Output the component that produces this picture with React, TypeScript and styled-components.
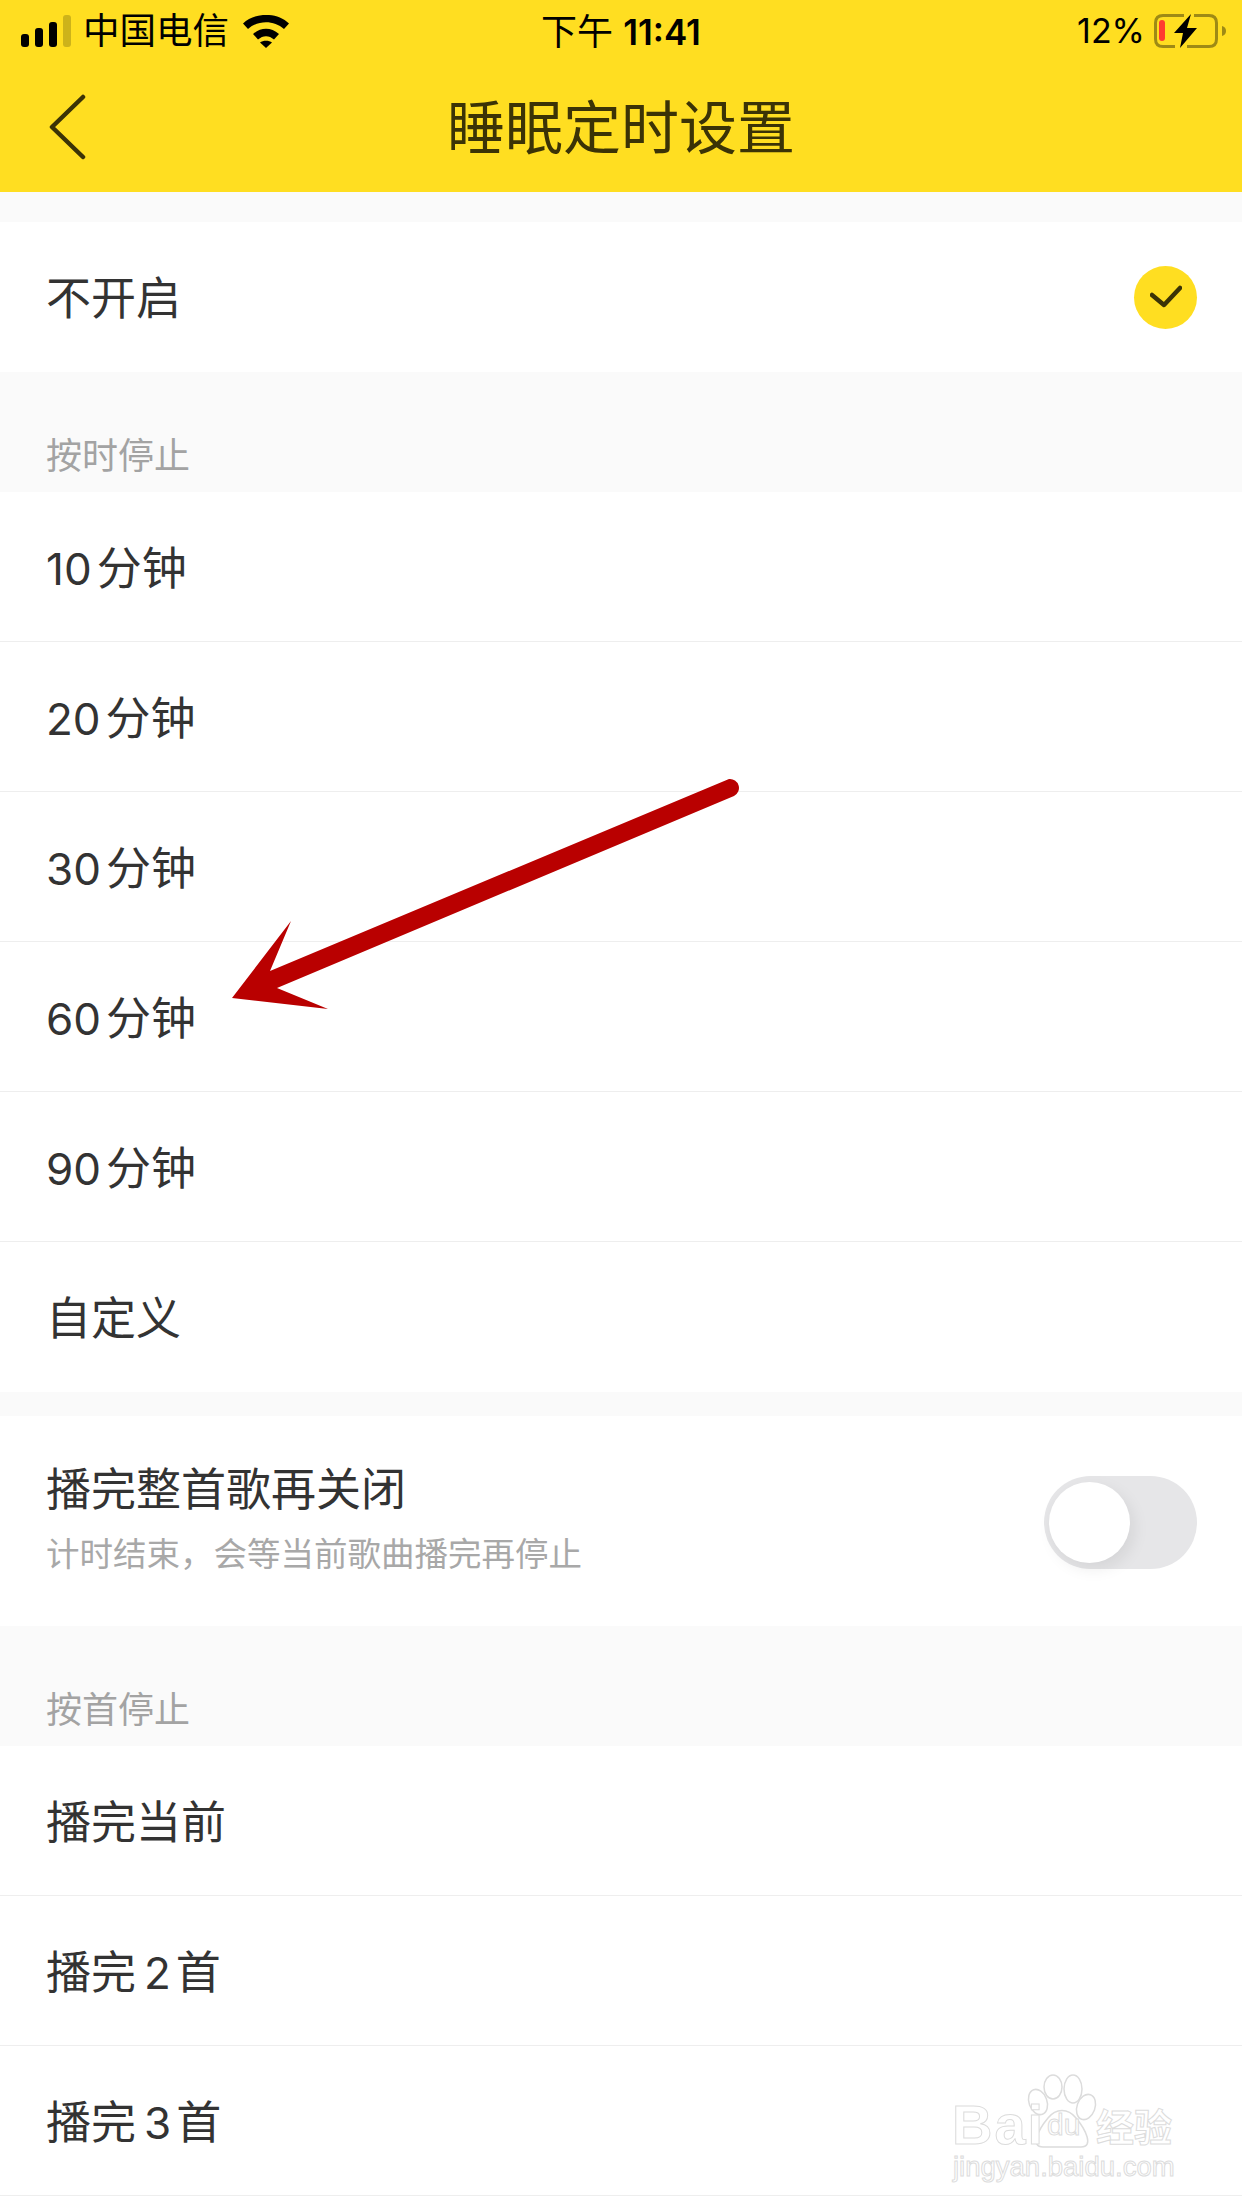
import styled, { createGlobalStyle } from 'styled-components';

const GlobalStyle = createGlobalStyle`
  html, body {
    margin: 0;
    padding: 0;
    background: #fafafa;
  }
`;

const Page = styled.div`
  position: relative;
  width: 1242px;
  height: 2208px;
  overflow: hidden;
  background: #fafafa;
  font-family: "Noto Sans CJK SC", "Noto Sans", sans-serif;
  color: #333;
`;

const Header = styled.header`
  height: 192px;
  background: #ffde21;
`;

const StatusBar = styled.div`
  height: 62px;
  display: grid;
  grid-template-columns: 1fr auto 1fr;
  align-items: center;
  color: #000;
`;

const StatusLeft = styled.div`
  display: flex;
  align-items: center;
  padding-left: 21px;
`;

const Signal = styled.div`
  display: flex;
  align-items: flex-end;
  gap: 6px;
  height: 32px;
  margin-right: 12px;
`;

const SignalBar = styled.span<{ $h: number; $off?: boolean }>`
  width: 8px;
  height: ${({ $h }) => $h}px;
  border-radius: 3px;
  background: ${({ $off }) => ($off ? '#cdb31a' : '#000')};
`;

const Carrier = styled.span`
  font-size: 36.5px;
  line-height: 58px;
  height: 62px;
  margin-right: 14px;
`;

const Clock = styled.div`
  font-size: 36px;
  line-height: 58px;
  height: 62px;
  display: flex;
  align-items: baseline;
`;

const ClockTime = styled.span`
  font-family: Inter, "Liberation Sans", sans-serif;
  font-size: 35px;
  font-weight: 600;
  margin-left: 10px;
`;

const StatusRight = styled.div`
  display: flex;
  align-items: center;
  justify-content: flex-end;
  padding-right: 16px;
`;

const Percent = styled.span`
  font-family: Inter, "Liberation Sans", sans-serif;
  font-size: 34px;
  line-height: 60px;
  margin-right: 9px;
`;

const NavBar = styled.div`
  position: relative;
  height: 130px;
  display: flex;
  align-items: center;
  justify-content: center;
`;

const BackButton = styled.button`
  position: absolute;
  left: 48px;
  top: 32px;
  padding: 0;
  border: 0;
  background: none;
  display: flex;
`;

const Title = styled.h1`
  margin: 0 0 6px;
  font-size: 58px;
  font-weight: 400;
  line-height: 124px;
  color: #3b3306;
`;

const TopGap = styled.div`
  height: 30px;
`;

const Row = styled.div<{ $plain?: boolean }>`
  height: 150px;
  box-sizing: border-box;
  padding: 0 45px 2px 46px;
  background: #fff;
  border-bottom: ${({ $plain }) => ($plain ? '0' : '1px solid #eee')};
  display: flex;
  align-items: center;
  justify-content: space-between;
  font-size: 45px;
  line-height: 60px;
`;

const Num = styled.span<{ $before?: number; $after: number }>`
  font-family: Inter, "Liberation Sans", sans-serif;
  font-size: 44px;
  line-height: 1;
  margin-left: ${({ $before }) => $before ?? 0}px;
  margin-right: ${({ $after }) => $after}px;
`;

const CheckBadge = styled.span`
  width: 63px;
  height: 63px;
  margin-top: 2px;
  border-radius: 50%;
  background: #ffde21;
  display: flex;
  align-items: center;
  justify-content: center;
`;

const SectionLabel = styled.div`
  height: 120px;
  box-sizing: border-box;
  padding: 0 46px 16px;
  display: flex;
  align-items: flex-end;
  font-size: 36px;
  line-height: 46px;
  color: #a3a3a3;
`;

const Gap = styled.div`
  height: 24px;
`;

const ToggleRow = styled.div`
  height: 210px;
  box-sizing: border-box;
  padding: 43px 45px 0 46px;
  background: #fff;
  display: flex;
  justify-content: space-between;
`;

const ToggleText = styled.div`
  display: flex;
  flex-direction: column;
`;

const ToggleTitle = styled.div`
  font-size: 45px;
  line-height: 56px;
`;

const ToggleHint = styled.div`
  margin-top: 14px;
  font-size: 33.5px;
  line-height: 46px;
  color: #a8a8a8;
`;

const Switch = styled.div`
  width: 153px;
  height: 93px;
  margin-top: 17px;
  box-sizing: border-box;
  padding: 6px 5px;
  border-radius: 47px;
  background: #e6e6e8;
`;

const Knob = styled.div`
  width: 81px;
  height: 81px;
  border-radius: 50%;
  background: #fff;
  box-shadow: 4px 6px 16px rgba(0, 0, 0, 0.08);
`;

const Arrow = styled.svg`
  position: absolute;
  left: 220px;
  top: 770px;
`;

const Watermark = styled.div`
  position: absolute;
  left: 952px;
  top: 2072px;
  width: 230px;
  height: 112px;
  color: #fff;
  font-family: "Liberation Sans", sans-serif;
  -webkit-text-stroke: 1px #dcdcdc;
`;

const Paw = styled.svg`
  position: absolute;
  left: 70px;
  top: 0;
`;

const MarkBai = styled.span`
  position: absolute;
  left: 0;
  top: 30px;
  font-size: 56px;
  font-weight: 700;
  line-height: 46px;
  letter-spacing: 2px;
`;

const MarkDu = styled.span`
  position: absolute;
  left: 95px;
  top: 35px;
  font-size: 30px;
  line-height: 36px;
`;

const MarkCn = styled.span`
  position: absolute;
  left: 144px;
  top: 30px;
  font-family: "Noto Sans CJK SC", sans-serif;
  font-size: 38px;
  font-weight: 700;
  line-height: 46px;
`;

const MarkUrl = styled.span`
  position: absolute;
  left: 1px;
  top: 79px;
  font-size: 27.5px;
  line-height: 32px;
  white-space: nowrap;
`;

const timed = ['10', '20', '30', '60', '90'];

export default function App() {
  return (
    <Page>
      <GlobalStyle />
      <Header>
        <StatusBar>
          <StatusLeft>
            <Signal>
              <SignalBar $h={13} />
              <SignalBar $h={19} />
              <SignalBar $h={25} />
              <SignalBar $h={32} $off />
            </Signal>
            <Carrier>中国电信</Carrier>
            <svg width="46" height="33" viewBox="0 0 46 33">
              <path d="M0 8.5C12-3 34-3 46 8.5L41 14C31 5 15 5 5 14Z" fill="#000" />
              <path d="M10 19C18 12 28 12 36 19L31 24.5C26 20 20 20 15 24.5Z" fill="#000" />
              <path d="M17 27.5C20 25 26 25 29 27.5L23 33Z" fill="#000" />
            </svg>
          </StatusLeft>
          <Clock>
            下午<ClockTime>11:41</ClockTime>
          </Clock>
          <StatusRight>
            <Percent>12%</Percent>
            <svg width="72" height="34" viewBox="0 0 72 34">
              <path
                d="M30 1.5H9Q1.5 1.5 1.5 9V25Q1.5 32.5 9 32.5H21M33 32.5H55Q62.5 32.5 62.5 25V9Q62.5 1.5 55 1.5H40"
                fill="none"
                stroke="#9e8a15"
                strokeWidth="3"
              />
              <rect x="5" y="6" width="6" height="21" rx="3" fill="#ff3b30" />
              <path d="M68 12Q72 13 72 17Q72 21 68 22Z" fill="#9e8a15" />
              <path d="M37 0L20 19H29L26 34L43 14H33Z" fill="#000" />
            </svg>
          </StatusRight>
        </StatusBar>
        <NavBar>
          <BackButton aria-label="返回">
            <svg width="40" height="66" viewBox="0 0 40 66">
              <path
                d="M35 3L4 33L35 63"
                fill="none"
                stroke="#3b3306"
                strokeWidth="4.5"
                strokeLinecap="round"
                strokeLinejoin="round"
              />
            </svg>
          </BackButton>
          <Title>睡眠定时设置</Title>
        </NavBar>
      </Header>

      <TopGap />
      <Row $plain>
        不开启
        <CheckBadge>
          <svg width="32" height="24" viewBox="0 0 32 24">
            <path
              d="M2 10L14 20L30 3"
              fill="none"
              stroke="#3b3306"
              strokeWidth="4.5"
              strokeLinecap="round"
              strokeLinejoin="round"
            />
          </svg>
        </CheckBadge>
      </Row>

      <SectionLabel>按时停止</SectionLabel>
      {timed.map((m) => (
        <Row key={m}>
          <span>
            <Num $after={5}>{m}</Num>分钟
          </span>
        </Row>
      ))}
      <Row $plain>自定义</Row>

      <Gap />
      <ToggleRow>
        <ToggleText>
          <ToggleTitle>播完整首歌再关闭</ToggleTitle>
          <ToggleHint>计时结束，会等当前歌曲播完再停止</ToggleHint>
        </ToggleText>
        <Switch>
          <Knob />
        </Switch>
      </ToggleRow>

      <SectionLabel>按首停止</SectionLabel>
      <Row>播完当前</Row>
      <Row>
        <span>
          播完<Num $before={8} $after={5}>2</Num>首
        </span>
      </Row>
      <Row>
        <span>
          播完<Num $before={8} $after={5}>3</Num>首
        </span>
      </Row>
      <Row $plain />

      <Arrow width="530" height="250" viewBox="220 770 530 250">
        <path
          d="M729 779L270 971L291 921L232 998L328 1009L277 988L734 796A9 9 0 0 0 729 779Z"
          fill="#b90000"
        />
      </Arrow>

      <Watermark>
        <Paw width="90" height="76" viewBox="0 0 90 76" fill="#fff" stroke="#dcdcdc" strokeWidth="1.5">
          <ellipse cx="16" cy="30" rx="9" ry="13" transform="rotate(-20 16 30)" />
          <ellipse cx="31" cy="15" rx="9" ry="12" />
          <ellipse cx="51" cy="17" rx="9" ry="14" />
          <ellipse cx="64" cy="35" rx="9" ry="13" transform="rotate(20 64 35)" />
          <path d="M21 75C8 75 16 58 26 46C34 36 46 36 54 46C64 58 72 75 59 75Z" />
        </Paw>
        <MarkBai>Bai</MarkBai>
        <MarkDu>du</MarkDu>
        <MarkCn>经验</MarkCn>
        <MarkUrl>jingyan.baidu.com</MarkUrl>
      </Watermark>
    </Page>
  );
}
